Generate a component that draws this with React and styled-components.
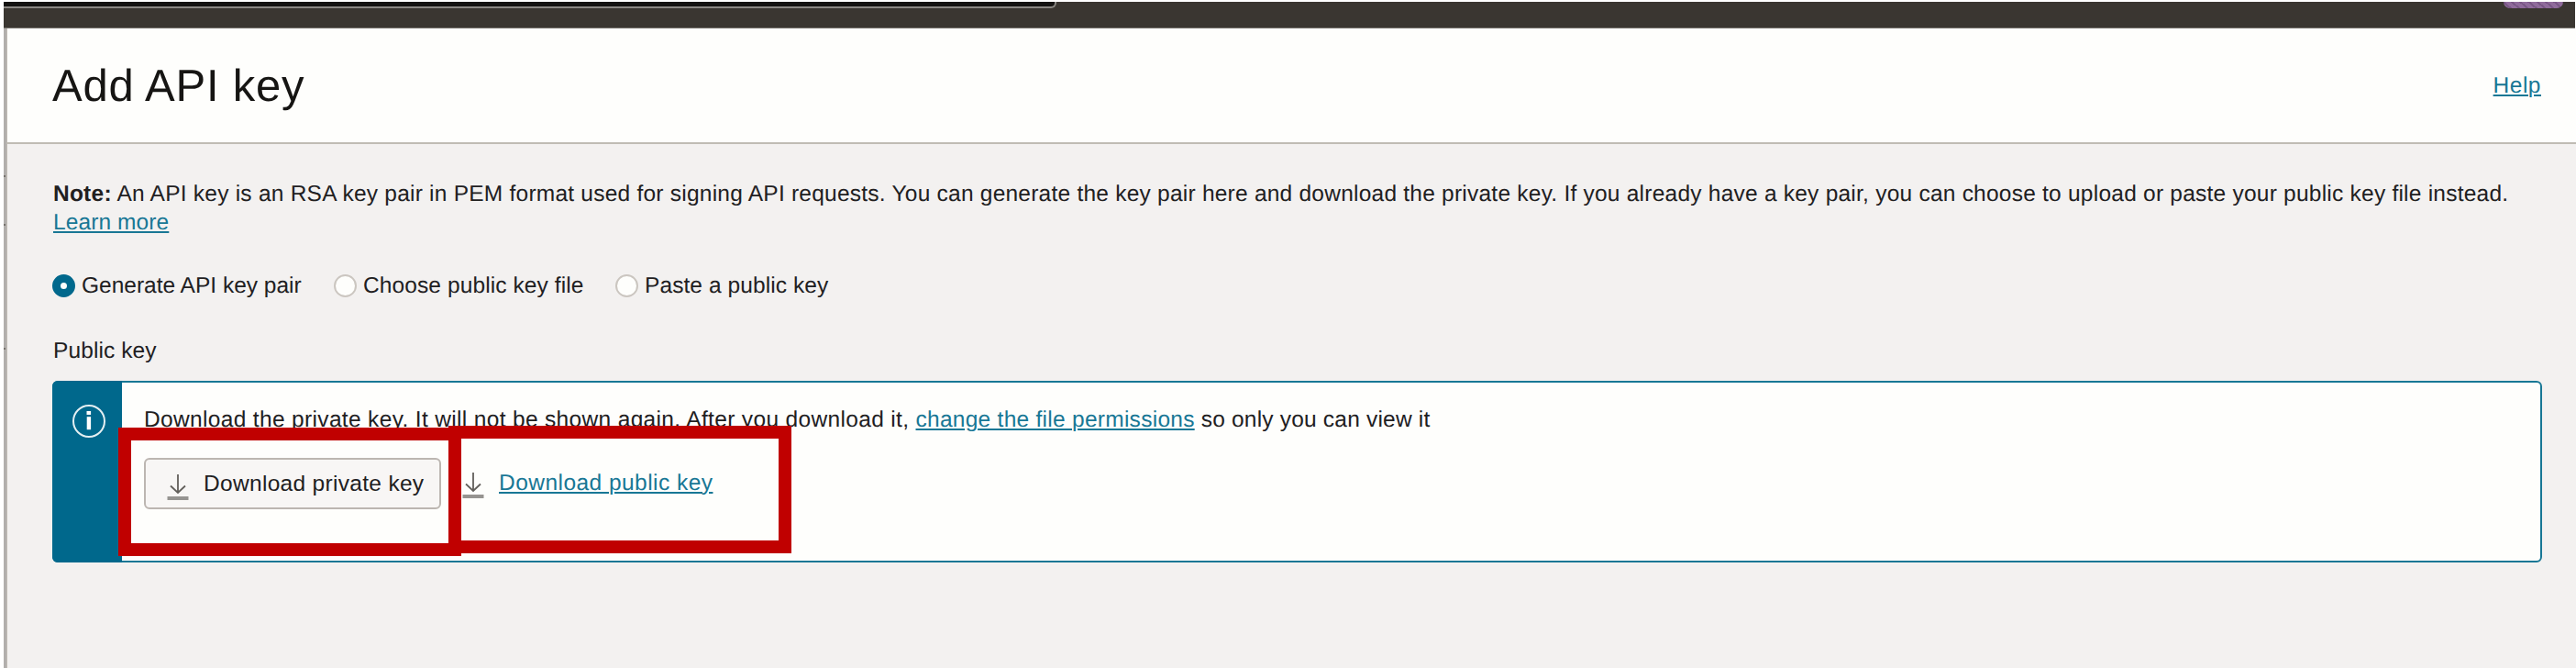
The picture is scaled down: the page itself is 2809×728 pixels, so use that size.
import React from "react";
import styled, { createGlobalStyle } from "styled-components";

const GlobalStyle = createGlobalStyle`
  * { box-sizing: border-box; }
  html, body { height: 728px; overflow: hidden; }
  body { margin: 0; background: #fff; }
`;

const Page = styled.div`
  display: flex;
  flex-direction: column;
  width: 2809px;
  height: 728px;
  overflow: hidden;
  padding: 2px 0 0 4px;
  color: #21201f;
  font: 24.5px/31px "Liberation Sans", Arial, sans-serif;
  white-space: nowrap;
  text-rendering: geometricPrecision;
`;

const TopBar = styled.div`
  display: flex;
  justify-content: space-between;
  align-items: flex-start;
  height: 29px;
  padding-right: 13px;
  margin-right: 1px;
  background: #3a3631;
  border-bottom: 1px solid #74716d;
`;

const SearchField = styled.div`
  width: 1148px;
  height: 7px;
  background: #141312;
  border-bottom: 2px solid #8b8884;
  border-right: 2px solid #8b8884;
  border-bottom-right-radius: 6px;
`;

const Avatar = styled.div`
  width: 65px;
  height: 7px;
  border-radius: 0 0 7px 7px;
  background: repeating-linear-gradient(40deg, #8f6b9b 0 4px, #795786 4px 6px);
`;

const Body = styled.div`
  display: flex;
  flex: 1;
`;

const Gutter = styled.div`
  width: 4px;
  background: #b2afac;
  border-right: 1px solid #bfbab4;
`;

const Tick = styled.div`
  width: 2px;
  height: 2px;
  background: #77736e;
  margin-top: ${(p) => p.$gap}px;
`;

const Panel = styled.main`
  flex: 1;
  display: flex;
  flex-direction: column;
  background: #f3f1f0;
`;

const Header = styled.header`
  display: flex;
  justify-content: space-between;
  align-items: center;
  height: 126px;
  padding: 0 38px 0 49px;
  background: #fefefc;
  border-bottom: 2px solid #c0bcb4;
`;

const Title = styled.h1`
  margin: 0;
  padding-top: 2px;
  font-size: 49px;
  line-height: 58px;
  font-weight: 400;
  color: #161513;
  letter-spacing: 0.75px;
`;

const Link = styled.a`
  color: #187795;
  letter-spacing: ${(p) => (p.$track ? `${p.$track}px` : "inherit")};
  text-decoration: underline;
  text-decoration-thickness: 2px;
  text-underline-offset: 2px;
`;

const Content = styled.section`
  display: flex;
  flex-direction: column;
  padding: 39px 37px 0 49px;
`;

const Note = styled.p`
  margin: 0;
  padding-left: 1px;
  letter-spacing: 0.233px;
`;

const RadioGroup = styled.div`
  display: flex;
  margin-top: 38px;
`;

const RadioOption = styled.label`
  display: flex;
  align-items: center;
  gap: 7px;
  width: 307px;
  letter-spacing: ${(p) => p.$track}px;
`;

const RadioMark = styled.span`
  width: 25px;
  height: 25px;
  border-radius: 50%;
  background: #fefefc;
  border: ${(p) => (p.$checked ? "9px solid #00688c" : "2px solid #cbc6c0")};
`;

const FieldLabel = styled.div`
  margin-top: 40px;
  padding-left: 1px;
  letter-spacing: 0.1px;
`;

const Alert = styled.div`
  position: relative;
  display: flex;
  height: 198px;
  margin-top: 17px;
  border: 2px solid #187795;
  border-radius: 6px;
  background: #fefefc;
`;

const AlertStripe = styled.div`
  display: flex;
  justify-content: center;
  width: 76px;
  margin: -2px 0 -2px -2px;
  padding: 25px 0 0 4px;
  border-radius: 6px 0 0 6px;
  background: #00688c;
`;

const AlertContent = styled.div`
  padding: 25px 0 0 24px;
`;

const AlertText = styled.div`
  letter-spacing: 0.34px;
`;

const AlertTail = styled.span`
  letter-spacing: 0.2px;
`;

const Actions = styled.div`
  display: flex;
  align-items: center;
  margin-top: 26px;
`;

const DownloadButton = styled.button`
  display: flex;
  align-items: center;
  width: 324px;
  height: 56px;
  padding: 0 0 2px 22px;
  gap: 15px;
  border: 2px solid #bcb6b1;
  border-radius: 6px;
  background: #f8f6f5;
  color: inherit;
  font: inherit;
  letter-spacing: 0.31px;
`;

const DownloadLink = styled.div`
  display: flex;
  align-items: center;
  gap: 15px;
  padding: 0 0 2px 22px;
`;

const Glyph = styled.svg`
  flex: none;
  position: relative;
  top: ${(p) => p.$drop || 0}px;
`;

const Highlight = styled.div`
  position: absolute;
  left: ${(p) => p.$x}px;
  top: ${(p) => p.$y}px;
  width: 374px;
  height: ${(p) => p.$h}px;
  border: 14px solid #c00000;
  pointer-events: none;
`;

function DownloadIcon({ drop }) {
  return (
    <Glyph $drop={drop} width="26" height="30" viewBox="0 0 26 30" fill="none">
      <path d="M13 1V21M5 13.5L13 21L21 13.5" stroke="#625f5b" strokeWidth="1.8" />
      <path d="M1.5 27H24.5" stroke="#969491" strokeWidth="4" />
    </Glyph>
  );
}

function InfoIcon() {
  return (
    <Glyph width="38" height="38" viewBox="0 0 38 38">
      <circle cx="19" cy="19" r="17" fill="none" stroke="#e4eff2" strokeWidth="2" />
      <rect x="16.5" y="8" width="4.6" height="4" fill="#fff" />
      <rect x="16.7" y="14.2" width="4.4" height="14" fill="#fff" />
    </Glyph>
  );
}

const options = [
  { label: "Generate API key pair", track: 0, checked: true },
  { label: "Choose public key file", track: 0.1 },
  { label: "Paste a public key", track: 0.08 },
];

export default function App() {
  return (
    <Page>
      <GlobalStyle />
      <TopBar>
        <SearchField />
        <Avatar />
      </TopBar>
      <Body>
        <Gutter>
          <Tick $gap={160} />
          <Tick $gap={51} />
          <Tick $gap={133} />
        </Gutter>
        <Panel>
          <Header>
            <Title>Add API key</Title>
            <Link $track={0.5}>Help</Link>
          </Header>
          <Content>
            <Note>
              <strong>Note:</strong> An API key is an RSA key pair in PEM format used for signing API
              requests. You can generate the key pair here and download the private key. If you
              already have a key pair, you can choose to upload or paste your public key file
              instead.
              <br />
              <Link $track={0.1}>Learn more</Link>
            </Note>
            <RadioGroup>
              {options.map((o) => (
                <RadioOption key={o.label} $track={o.track}>
                  <RadioMark $checked={o.checked} />
                  {o.label}
                </RadioOption>
              ))}
            </RadioGroup>
            <FieldLabel>Public key</FieldLabel>
            <Alert>
              <AlertStripe>
                <InfoIcon />
              </AlertStripe>
              <AlertContent>
                <AlertText>
                  Download the private key. It will not be shown again. After you download it,{" "}
                  <Link $track={0.27}>change the file permissions</Link>
                  <AlertTail> so only you can view it</AlertTail>
                </AlertText>
                <Actions>
                  <DownloadButton>
                    <DownloadIcon drop={5} />
                    Download private key
                  </DownloadButton>
                  <DownloadLink>
                    <DownloadIcon drop={3} />
                    <Link $track={0.46}>Download public key</Link>
                  </DownloadLink>
                </Actions>
              </AlertContent>
              <Highlight $x={70} $y={49} $h={140} />
              <Highlight $x={430} $y={47} $h={139} />
            </Alert>
          </Content>
        </Panel>
      </Body>
    </Page>
  );
}
